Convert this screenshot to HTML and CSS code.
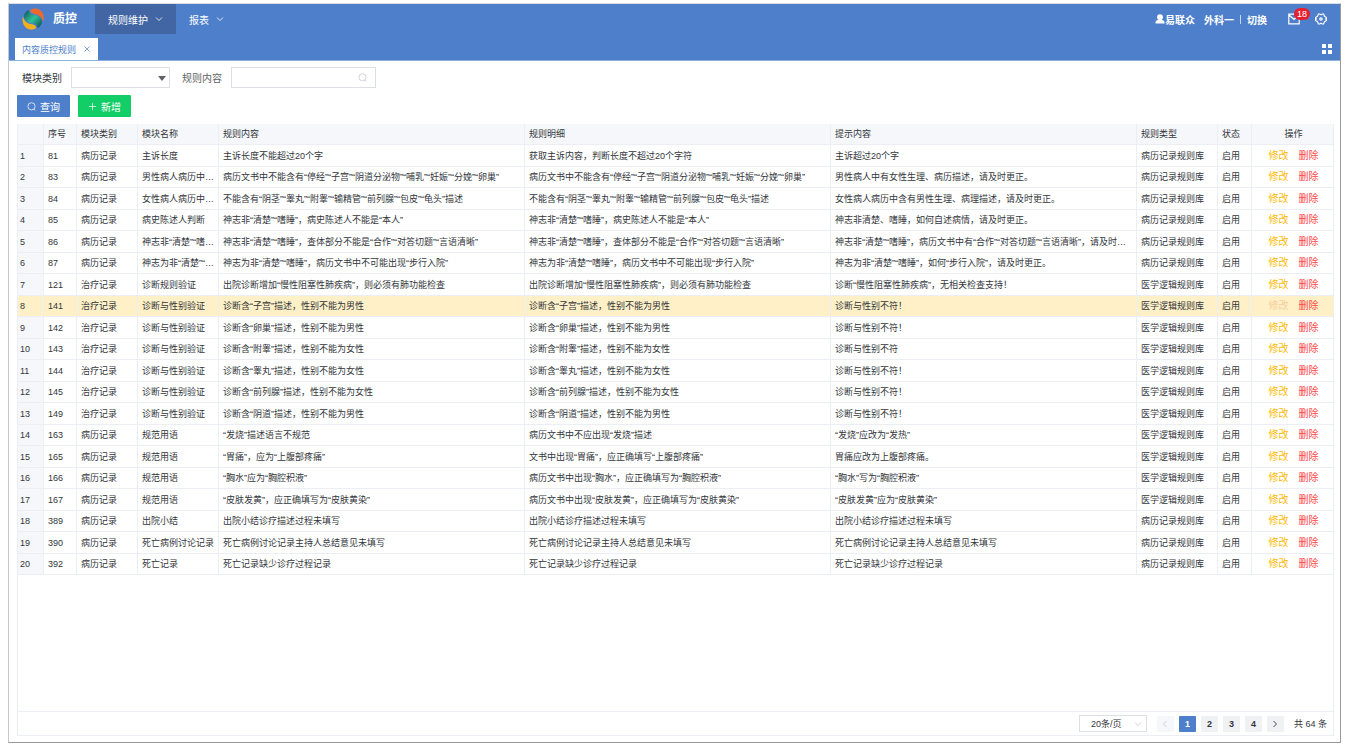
FILE: index.html
```
<!DOCTYPE html>
<html lang="zh-CN">
<head>
    <meta charset="UTF-8">
    <meta name="viewport" content="width=device-width, initial-scale=1.0">
    <title>质控</title>
    <link rel="stylesheet" href="styles.css">
</head>
<body>
    <div class="window">
        <header class="header">
            <div class="navbar">
                <div class="brand">
                    <svg class="logo" viewBox="0 0 44 44">
                        <defs>
                            <linearGradient id="teal" x1="0" y1="0" x2="1" y2="1">
                                <stop offset="0" stop-color="#0b4a52"/>
                                <stop offset="0.5" stop-color="#2fc29a"/>
                                <stop offset="1" stop-color="#0a4450"/>
                            </linearGradient>
                        </defs>
                        <path fill="#ee6a2c" d="M17 4C24-2 38 1 42 12C44 18 44 23 42 27C40 18 34 14 26 12C20 11 16 8 17 4Z"/>
                        <path fill="#f2b01e" d="M28 40C22 46 8 44 3 33C1 28 0 22 2 17C4 26 10 31 18 32C25 33 29 36 28 40Z"/>
                        <path fill="url(#teal)" d="M14 4C13 10 18 13 25 14C35 16 41 21 40 29C38 35 35 38 31 40C31 34 26 31 19 30C9 28 3 23 4 15C6 9 9 6 14 4Z"/>
                    </svg>
                    <h1>质控</h1>
                </div>
                <nav class="menu">
                    <button class="menu-item active">规则维护
                        <svg class="arrow" viewBox="0 0 8 8"><path d="M1 2.5L4 5.5L7 2.5"/></svg>
                    </button>
                    <button class="menu-item">报表
                        <svg class="arrow" viewBox="0 0 8 8"><path d="M1 2.5L4 5.5L7 2.5"/></svg>
                    </button>
                </nav>
                <div class="user">
                    <svg class="user-icon" viewBox="0 0 10 10"><circle cx="5" cy="3.2" r="2.9"/><path d="M0.5 9.5V8Q0.5 6.5 3 6H7Q9.5 6.5 9.5 8V9.5Z"/></svg>
                    <span class="user-name">易联众</span>
                    <span>外科一</span>
                    <span class="divider"></span>
                    <a href="#" class="switch">切换</a>
                    <button class="icon-button mail" aria-label="消息">
                        <svg viewBox="0 0 12 12"><path d="M0.8 1.2H11.2V10.8H0.8ZM1 2L6 6.5L11 2"/></svg>
                        <span class="badge">18</span>
                    </button>
                    <button class="icon-button" aria-label="设置">
                        <svg viewBox="0 0 12 12"><path d="M3.4 1H4.8L6 1.7L7.2 1H8.6L9.4 3.2L11.4 4.6V5.4L10.6 6L11.4 6.6V7.4L9.4 8.8L8.6 11H7.2L6 10.3L4.8 11H3.4L2.6 8.8L0.6 7.4V6.6L1.4 6L0.6 5.4V4.6L2.6 3.2Z"/><circle cx="6" cy="6" r="1.2"/></svg>
                    </button>
                </div>
            </div>
            <div class="tabs">
                <div class="tab">
                    <span>内容质控规则</span>
                    <button class="tab-close" aria-label="关闭">
                        <svg viewBox="0 0 8 8"><path d="M1.5 1.5L6.5 6.5M6.5 1.5L1.5 6.5"/></svg>
                    </button>
                </div>
                <button class="tabs-menu" aria-label="全部标签">
                    <svg viewBox="0 0 10 10"><path d="M0 0H4V4H0ZM6 0H10V4H6ZM0 6H4V10H0ZM6 6H10V10H6Z"/></svg>
                </button>
            </div>
        </header>

        <main class="content">
            <form class="filters">
                <label for="category">模块类别</label>
                <div class="select-box">
                    <select id="category"><option></option></select>
                    <svg class="caret" viewBox="0 0 8 5"><path d="M0 0H8L4 5Z"/></svg>
                </div>
                <label for="keyword" class="light">规则内容</label>
                <div class="search-box">
                    <input type="text" id="keyword">
                    <svg class="search-icon" viewBox="0 0 10 10"><circle cx="5" cy="4.8" r="4"/><path d="M7.5 7.8L9.2 9.2"/></svg>
                </div>
            </form>
            <div class="actions">
                <button class="btn btn-primary">
                    <svg viewBox="0 0 10 10"><circle cx="5" cy="4.8" r="4"/><path d="M7.5 7.8L9.2 9.2"/></svg>
                    查询
                </button>
                <button class="btn btn-success">
                    <svg viewBox="0 0 10 10"><path d="M5 1V9M1 5H9"/></svg>
                    新增
                </button>
            </div>

            <div class="grid">
                <div class="grid-body">
                    <table>
                        <colgroup>
                            <col class="col-index">
                            <col class="col-id">
                            <col class="col-category">
                            <col class="col-name">
                            <col>
                            <col>
                            <col>
                            <col class="col-type">
                            <col class="col-status">
                            <col class="col-ops">
                        </colgroup>
                        <thead>
                            <tr>
                                <th></th>
                                <th>序号</th>
                                <th>模块类别</th>
                                <th>模块名称</th>
                                <th>规则内容</th>
                                <th>规则明细</th>
                                <th>提示内容</th>
                                <th>规则类型</th>
                                <th>状态</th>
                                <th class="ops">操作</th>
                            </tr>
                        </thead>
                        <tbody id="rules"></tbody>
                    </table>
                </div>
                <div class="pager">
                    <div class="page-size">
                        <select aria-label="每页条数"><option>20条/页</option></select>
                        <svg class="arrow" viewBox="0 0 8 8"><path d="M1 2.5L4 5.5L7 2.5"/></svg>
                    </div>
                    <div class="pages">
                        <button disabled aria-label="上一页"><svg viewBox="0 0 8 8"><path d="M5.5 1L2.5 4L5.5 7"/></svg></button>
                        <button class="current">1</button>
                        <button>2</button>
                        <button>3</button>
                        <button>4</button>
                        <button aria-label="下一页"><svg viewBox="0 0 8 8"><path d="M2.5 1L5.5 4L2.5 7"/></svg></button>
                    </div>
                    <span class="total">共 64 条</span>
                </div>
            </div>
        </main>
    </div>
    <script src="app.js"></script>
</body>
</html>
```
FILE: styles.css
```
:root {
    --primary: #4e7fcb;
    --primary-dark: #4166a3;
    --success: #13ce66;
    --warning: #ffba00;
    --danger: #ff4949;
    --line: #ebeef5;
    --input-line: #dcdfe6;
    --head: #f5f7fa;
    --text: #33363b;
}

* {
    margin: 0;
    padding: 0;
    box-sizing: border-box;
}

body {
    height: 100vh;
    padding: 3px 5px 5px 8px;
    background: #fff;
    color: var(--text);
    font-family: "Liberation Sans", "Noto Sans CJK SC", sans-serif;
    font-size: 9px;
}

button,
input,
select {
    font: inherit;
    color: inherit;
    border: none;
    background: none;
}

button {
    cursor: pointer;
}

a {
    color: inherit;
    text-decoration: none;
}

svg {
    display: block;
    flex-shrink: 0;
    fill: none;
    stroke: currentColor;
}

.window {
    height: 100%;
    display: flex;
    flex-direction: column;
    border: 1px solid #999;
    border-top-color: #d9dde3;
    border-left-color: #c8c8c8;
}

/* 顶部 */
.header {
    background: var(--primary);
    border-bottom: 1px solid #8fb0e2;
    color: #fff;
}

.navbar {
    display: flex;
    height: 30px;
}

.brand {
    width: 86px;
    padding-left: 13px;
    display: flex;
    align-items: center;
    gap: 9px;
}

.logo {
    width: 22px;
    height: 22px;
    stroke: none;
}

h1 {
    font-size: 12px;
    line-height: 16px;
}

.menu {
    display: flex;
    font-size: 10px;
}

.menu-item {
    padding: 0 13px;
    display: flex;
    align-items: center;
    gap: 7px;
}

.menu-item.active {
    background: var(--primary-dark);
}

.arrow {
    width: 8px;
    height: 8px;
    stroke-width: 0.8;
}

.user {
    margin-left: auto;
    padding-right: 13px;
    display: flex;
    align-items: center;
    font-size: 10px;
    font-weight: bold;
}

.user-icon {
    width: 10px;
    height: 10px;
    fill: #fff;
    stroke: none;
}

.user-name {
    margin-right: 9px;
}

.divider {
    width: 1px;
    height: 9px;
    margin: 0 6px;
    background: #c9d8ef;
}

.switch {
    margin-right: 21px;
}

.icon-button svg {
    width: 12px;
    height: 12px;
    stroke-width: 1.2;
}

.mail {
    position: relative;
    margin-right: 15px;
}

.badge {
    position: absolute;
    top: -5px;
    left: 6px;
    width: 16px;
    height: 12px;
    border-radius: 6px;
    background: #e6202e;
    font-size: 9px;
    font-weight: normal;
    line-height: 12px;
    text-align: center;
}

.tabs {
    display: flex;
    align-items: center;
    padding: 4px 8px 0 6px;
}

.tab {
    height: 22px;
    padding: 0 7px;
    display: flex;
    align-items: center;
    gap: 7px;
    background: #fff;
    color: var(--primary);
}

.tab-close svg {
    width: 8px;
    height: 8px;
    stroke-width: 0.7;
}

.tabs-menu {
    margin-left: auto;
}

.tabs-menu svg {
    width: 10px;
    height: 10px;
    fill: #fff;
    stroke: none;
}

/* 查询条件 */
.content {
    flex: 1;
    min-height: 0;
    display: flex;
    flex-direction: column;
    padding: 6px 6px 6px 8px;
}

.filters {
    display: flex;
    align-items: center;
    padding-left: 5px;
    font-size: 10px;
}

.filters label.light {
    margin-left: 12px;
    color: #606266;
}

.select-box,
.search-box {
    position: relative;
    height: 21px;
    margin-left: 9px;
}

.select-box {
    width: 99px;
}

.search-box {
    width: 145px;
}

.select-box select,
.search-box input {
    width: 100%;
    height: 100%;
    padding: 0 20px 0 6px;
    border: 1px solid var(--input-line);
    background: #fff;
    appearance: none;
}

.caret {
    position: absolute;
    top: 9px;
    right: 4px;
    width: 8px;
    height: 5px;
    fill: #606266;
    stroke: none;
    pointer-events: none;
}

.search-icon {
    position: absolute;
    top: 6px;
    right: 9px;
    width: 9px;
    height: 9px;
    color: #c0c4cc;
    stroke-width: 0.8;
}

.actions {
    display: flex;
    gap: 8px;
    margin: 7px 0;
}

.btn {
    height: 22px;
    padding: 0 10px;
    display: flex;
    align-items: center;
    gap: 4px;
    border-radius: 1px;
    color: #fff;
    font-size: 10px;
}

.btn svg {
    width: 9px;
    height: 9px;
    stroke-width: 0.8;
}

.btn-primary {
    background: var(--primary);
}

.btn-success {
    background: var(--success);
}

/* 表格 */
.grid {
    flex: 1;
    min-height: 0;
    display: flex;
    flex-direction: column;
    border: 1px solid var(--line);
    border-top: none;
}

.grid-body {
    flex: 1;
    min-height: 0;
    overflow: hidden;
}

table {
    width: 100%;
    table-layout: fixed;
    border-collapse: separate;
    border-spacing: 0;
}

.col-index { width: 26px; }
.col-id { width: 33px; }
.col-category { width: 61px; }
.col-name { width: 81px; }
.col-type { width: 81px; }
.col-status { width: 34px; }
.col-ops { width: 81px; }

th,
td {
    height: 21px;
    padding: 0 2px 0 4px;
    border-right: 1px solid var(--line);
    border-bottom: 1px solid var(--line);
    font-weight: normal;
    line-height: 14px;
    text-align: left;
    white-space: nowrap;
    overflow: hidden;
    text-overflow: ellipsis;
}

th:last-child,
td:last-child {
    border-right: none;
}

tbody tr:nth-child(odd) td {
    height: 22px;
}

th,
td:first-child {
    background: var(--head);
}

td:first-child {
    padding: 0 2px;
}

tr.hover td {
    background: #fff0c7;
}

.ops {
    text-align: center;
}

.ops button {
    font-size: 10px;
    line-height: 14px;
}

.edit {
    margin-right: 10px;
    color: var(--warning);
}

.remove {
    color: var(--danger);
}

tr.hover .edit {
    color: #f5cf9b;
}

/* 分页 */
.pager {
    height: 24px;
    padding-right: 6px;
    display: flex;
    align-items: center;
    justify-content: flex-end;
    border-top: 1px solid var(--line);
}

.page-size {
    position: relative;
    width: 68px;
    height: 17px;
    margin-right: 10px;
}

.page-size select {
    width: 100%;
    height: 100%;
    padding-left: 11px;
    border: 1px solid var(--input-line);
    background: #fff;
    appearance: none;
}

.page-size .arrow {
    position: absolute;
    top: 5px;
    right: 5px;
    color: #c0c4cc;
    pointer-events: none;
}

.pages {
    display: flex;
    gap: 5px;
    margin-right: 10px;
}

.pages button {
    width: 17px;
    height: 16px;
    display: flex;
    align-items: center;
    justify-content: center;
    border-radius: 1px;
    background: #f0f1f5;
    font-weight: bold;
}

.pages button:disabled {
    background: #f6f7fa;
    color: #c0c4cc;
}

.pages .current {
    background: var(--primary);
    color: #fff;
}

.pages svg {
    width: 8px;
    height: 8px;
    stroke-width: 0.9;
}
```
FILE: app.js
```
const BL = '病历记录';
const ZL = '治疗记录';

// 序号, 模块类别, 模块名称, 规则内容, 规则明细, 提示内容
const rules = [
    [81, BL, '主诉长度', '主诉长度不能超过20个字', '获取主诉内容，判断长度不超过20个字符', '主诉超过20个字'],
    [83, BL, '男性病人病历中不能含有女性描述', '病历文书中不能含有“停经”“子宫”“阴道分泌物”“哺乳”“妊娠”“分娩”“卵巢”', '病历文书中不能含有“停经”“子宫”“阴道分泌物”“哺乳”“妊娠”“分娩”“卵巢”', '男性病人中有女性生理、病历描述，请及时更正。'],
    [84, BL, '女性病人病历中不能含有男性描述', '不能含有“阴茎”“睾丸”“附睾”“输精管”“前列腺”“包皮”“龟头”描述', '不能含有“阴茎”“睾丸”“附睾”“输精管”“前列腺”“包皮”“龟头”描述', '女性病人病历中含有男性生理、病理描述，请及时更正。'],
    [85, BL, '病史陈述人判断', '神志非“清楚”“嗜睡”，病史陈述人不能是“本人”', '神志非“清楚”“嗜睡”，病史陈述人不能是“本人”', '神志非清楚、嗜睡，如何自述病情，请及时更正。'],
    [86, BL, '神志非“清楚”“嗜睡”', '神志非“清楚”“嗜睡”，查体部分不能是“合作”“对答切题”“言语清晰”', '神志非“清楚”“嗜睡”，查体部分不能是“合作”“对答切题”“言语清晰”', '神志非“清楚”“嗜睡”，病历文书中有“合作”“对答切题”“言语清晰”，请及时更正。'],
    [87, BL, '神志为非“清楚”“嗜睡”', '神志为非“清楚”“嗜睡”，病历文书中不可能出现“步行入院”', '神志为非“清楚”“嗜睡”，病历文书中不可能出现“步行入院”', '神志为非“清楚”“嗜睡”，如何“步行入院”，请及时更正。'],
    [121, ZL, '诊断规则验证', '出院诊断增加“慢性阻塞性肺疾病”，则必须有肺功能检查', '出院诊断增加“慢性阻塞性肺疾病”，则必须有肺功能检查', '诊断“慢性阻塞性肺疾病”，无相关检查支持！'],
    [141, ZL, '诊断与性别验证', '诊断含“子宫”描述，性别不能为男性', '诊断含“子宫”描述，性别不能为男性', '诊断与性别不符！'],
    [142, ZL, '诊断与性别验证', '诊断含“卵巢”描述，性别不能为男性', '诊断含“卵巢”描述，性别不能为男性', '诊断与性别不符！'],
    [143, ZL, '诊断与性别验证', '诊断含“附睾”描述，性别不能为女性', '诊断含“附睾”描述，性别不能为女性', '诊断与性别不符'],
    [144, ZL, '诊断与性别验证', '诊断含“睾丸”描述，性别不能为女性', '诊断含“睾丸”描述，性别不能为女性', '诊断与性别不符！'],
    [145, ZL, '诊断与性别验证', '诊断含“前列腺”描述，性别不能为女性', '诊断含“前列腺”描述，性别不能为女性', '诊断与性别不符！'],
    [149, ZL, '诊断与性别验证', '诊断含“阴道”描述，性别不能为男性', '诊断含“阴道”描述，性别不能为男性', '诊断与性别不符！'],
    [163, BL, '规范用语', '“发烧”描述语言不规范', '病历文书中不应出现“发烧”描述', '“发烧”应改为“发热”'],
    [165, BL, '规范用语', '“胃痛”，应为“上腹部疼痛”', '文书中出现“胃痛”，应正确填写“上腹部疼痛”', '胃痛应改为上腹部疼痛。'],
    [166, BL, '规范用语', '“胸水”应为“胸腔积液”', '病历文书中出现“胸水”，应正确填写为“胸腔积液”', '“胸水”写为“胸腔积液”'],
    [167, BL, '规范用语', '“皮肤发黄”，应正确填写为“皮肤黄染”', '病历文书中出现“皮肤发黄”，应正确填写为“皮肤黄染”', '“皮肤发黄”应为“皮肤黄染”'],
    [389, BL, '出院小结', '出院小结诊疗描述过程未填写', '出院小结诊疗描述过程未填写', '出院小结诊疗描述过程未填写'],
    [390, BL, '死亡病例讨论记录', '死亡病例讨论记录主持人总结意见未填写', '死亡病例讨论记录主持人总结意见未填写', '死亡病例讨论记录主持人总结意见未填写'],
    [392, BL, '死亡记录', '死亡记录缺少诊疗过程记录', '死亡记录缺少诊疗过程记录', '死亡记录缺少诊疗过程记录']
];

// 序号 121 ~ 167 属于医学逻辑规则库
function ruleType(id) {
    return id >= 121 && id <= 167 ? '医学逻辑规则库' : '病历记录规则库';
}

document.getElementById('rules').innerHTML = rules.map((rule, i) => {
    const cells = [i + 1, ...rule, ruleType(rule[0]), '启用'];
    return `<tr class="${rule[0] === 141 ? 'hover' : ''}">
        ${cells.map(cell => `<td>${cell}</td>`).join('')}
        <td class="ops"><button class="edit">修改</button><button class="remove">删除</button></td>
    </tr>`;
}).join('');
```
